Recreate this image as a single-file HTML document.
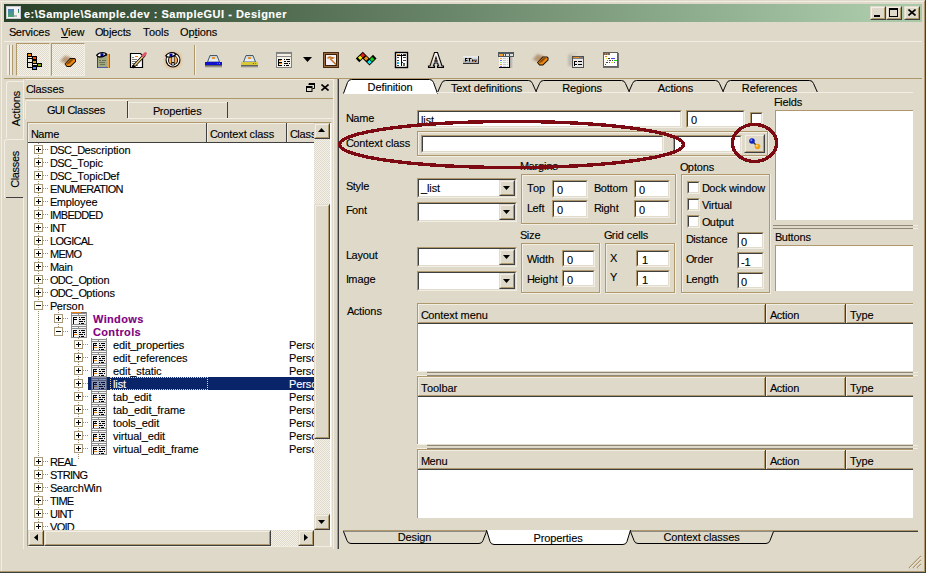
<!DOCTYPE html><html><head><meta charset="utf-8"><style>
html,body{margin:0;padding:0;}
body{width:926px;height:573px;overflow:hidden;position:relative;background:#ded9c9;font-family:"Liberation Sans",sans-serif;font-size:11px;color:#000;}
div{position:absolute;box-sizing:border-box;}
.t{white-space:nowrap;line-height:13px;height:13px;margin-top:1px;letter-spacing:-0.1px;-webkit-text-stroke:0.12px currentColor;}
svg{position:absolute;}
</style></head><body>
<div style="left:0px;top:1px;width:925px;height:1px;background:#f2eee4"></div>
<div style="left:1px;top:1px;width:1px;height:571px;background:#f2eee4"></div>
<div style="left:0px;top:571px;width:926px;height:1px;background:#ae986c"></div>
<div style="left:924px;top:1px;width:1px;height:571px;background:#ae986c"></div>
<div style="left:0px;top:572px;width:926px;height:1px;background:#3f3f3f"></div>
<div style="left:925px;top:0px;width:1px;height:573px;background:#3f3f3f"></div>
<div style="left:4px;top:4px;width:918px;height:18px;background:linear-gradient(to right,#284028 0%,#a8c8a8 94%)"></div>
<div style="left:6px;top:6px;width:15px;height:13px;background:#f2f2f2;border:1px solid #c8c8d0"></div>
<div style="left:8px;top:9px;width:6px;height:8px;background:linear-gradient(#4a80b8,#48a868)"></div>
<div style="left:18px;top:9px;width:1px;height:4px;background:linear-gradient(#3050b0,#40b040)"></div>
<div style="left:14px;top:15px;width:3px;height:2px;background:#b8b8b8"></div>
<div class="t" style="left:24px;top:7px;color:#fff;font-weight:bold;letter-spacing:0.5px">e:\Sample\Sample.dev : SampleGUI - Designer</div>
<div style="left:870px;top:6px;width:16px;height:14px;background:#ded9c9;border-top:1px solid #e0dbcc;border-left:1px solid #e0dbcc;border-right:1px solid #3f3f3f;border-bottom:1px solid #3f3f3f;box-sizing:border-box"></div>
<div style="left:871px;top:7px;width:14px;height:12px;border-top:1px solid #f2eee4;border-left:1px solid #f2eee4;border-right:1px solid #ae986c;border-bottom:1px solid #ae986c;box-sizing:border-box"></div>
<div style="left:886px;top:6px;width:16px;height:14px;background:#ded9c9;border-top:1px solid #e0dbcc;border-left:1px solid #e0dbcc;border-right:1px solid #3f3f3f;border-bottom:1px solid #3f3f3f;box-sizing:border-box"></div>
<div style="left:887px;top:7px;width:14px;height:12px;border-top:1px solid #f2eee4;border-left:1px solid #f2eee4;border-right:1px solid #ae986c;border-bottom:1px solid #ae986c;box-sizing:border-box"></div>
<div style="left:904px;top:6px;width:16px;height:14px;background:#ded9c9;border-top:1px solid #e0dbcc;border-left:1px solid #e0dbcc;border-right:1px solid #3f3f3f;border-bottom:1px solid #3f3f3f;box-sizing:border-box"></div>
<div style="left:905px;top:7px;width:14px;height:12px;border-top:1px solid #f2eee4;border-left:1px solid #f2eee4;border-right:1px solid #ae986c;border-bottom:1px solid #ae986c;box-sizing:border-box"></div>
<div style="left:874px;top:15px;width:6px;height:2px;background:#000"></div>
<div style="left:889px;top:8px;width:9px;height:9px;border:1px solid #000;border-top:2px solid #000"></div>
<svg style="left:908px;top:9px" width="8" height="7" viewBox="0 0 8 7"><path d="M0.5 0.5L7.5 6.5M7.5 0.5L0.5 6.5" stroke="#000" stroke-width="1.6"/></svg>
<div class="t" style="left:9px;top:25px;"><span style="letter-spacing:-0.7px">S</span>ervices</div>
<div class="t" style="left:61px;top:25px;"><u>V</u>iew</div>
<div class="t" style="left:95px;top:25px;"><span style="letter-spacing:-0.7px">O</span>bjects</div>
<div class="t" style="left:143px;top:25px;"><span style="letter-spacing:-0.7px">T</span>ools</div>
<div class="t" style="left:180px;top:25px;">Op<u>t</u>ions</div>
<div style="left:4px;top:41px;width:918px;height:1px;background:#f2eee4"></div>
<div style="left:4px;top:78px;width:918px;height:1px;background:#ae986c"></div>
<div style="left:7px;top:45px;width:1px;height:30px;background:#f2eee4"></div>
<div style="left:8px;top:45px;width:1px;height:30px;background:#f2eee4"></div>
<div style="left:9px;top:45px;width:1px;height:30px;background:#ae986c"></div>
<div style="left:10px;top:45px;width:1px;height:30px;background:#f2eee4"></div>
<div style="left:11px;top:45px;width:1px;height:30px;background:#f2eee4"></div>
<div style="left:12px;top:45px;width:1px;height:30px;background:#ae986c"></div>
<div style="left:16px;top:43px;width:34px;height:33px;border-top:1px solid #ae986c;border-left:1px solid #ae986c;border-right:1px solid #f2eee4;border-bottom:1px solid #f2eee4;background-image:repeating-conic-gradient(#ded9c9 0 25%,#f4f2ea 0 50%);background-size:2px 2px"></div>
<div style="left:51px;top:43px;width:34px;height:33px;border-top:1px solid #ae986c;border-left:1px solid #ae986c;border-right:1px solid #f2eee4;border-bottom:1px solid #f2eee4;background-image:repeating-conic-gradient(#ded9c9 0 25%,#f4f2ea 0 50%);background-size:2px 2px"></div>
<div style="left:194px;top:45px;width:1px;height:30px;background:#ae986c"></div>
<div style="left:195px;top:45px;width:1px;height:30px;background:#f2eee4"></div>
<svg style="left:0;top:0" width="926" height="80" viewBox="0 0 926 80"><defs><filter id="bl" x="-50%" y="-50%" width="200%" height="200%"><feGaussianBlur stdDeviation="1.1"/></filter><filter id="bl2" x="-50%" y="-50%" width="200%" height="200%"><feGaussianBlur stdDeviation="0.8"/></filter><linearGradient id="dg" x1="0" y1="0" x2="0" y2="1"><stop offset="0" stop-color="#b8d0d8"/><stop offset="1" stop-color="#f4fcff"/></linearGradient><linearGradient id="sg" x1="0" y1="0" x2="0" y2="1"><stop offset="0" stop-color="#303030" stop-opacity=".85"/><stop offset="1" stop-color="#303030" stop-opacity="0"/></linearGradient><linearGradient id="eg" x1="0" y1="0" x2="0" y2="1"><stop offset="0" stop-color="#f0f0f0"/><stop offset="1" stop-color="#a8a8a8"/></linearGradient><linearGradient id="ag" x1="0" y1="0" x2="0" y2="1"><stop offset="0" stop-color="#ffffff"/><stop offset=".6" stop-color="#e8e8e8"/><stop offset="1" stop-color="#b8b8b8"/></linearGradient><linearGradient id="wg" x1="0" y1="0" x2="1" y2="0"><stop offset="0" stop-color="#a8a49c"/><stop offset="1" stop-color="#e8e4dc"/></linearGradient></defs><rect x="27" y="53" width="5" height="4" fill="#000"/><rect x="28" y="54" width="3" height="2" fill="#f08a10"/><rect x="27" y="57" width="1" height="11" fill="#000"/><rect x="27" y="58" width="5" height="1" fill="#000"/><rect x="32" y="56" width="5" height="4" fill="#000"/><rect x="33" y="57" width="3" height="2" fill="#f04010"/><rect x="27" y="62" width="5" height="1" fill="#000"/><rect x="32" y="60" width="5" height="4" fill="#000"/><rect x="33" y="61" width="3" height="2" fill="#d0a020"/><rect x="32" y="64" width="1" height="2" fill="#000"/><rect x="32" y="65" width="5" height="1" fill="#000"/><rect x="37" y="63" width="5" height="4" fill="#000"/><rect x="38" y="64" width="3" height="2" fill="#80a010"/><rect x="27" y="67" width="5" height="1" fill="#000"/><rect x="32" y="66" width="5" height="4" fill="#000"/><rect x="33" y="67" width="3" height="2" fill="#5080f0"/><polygon points="60,61 65,55.5 72,58 67,64" fill="#a88058" opacity=".75" filter="url(#bl)"/><polygon points="64.5,64 70,58 74.8,58 76,59.2 76,61.8 70.5,67 66.8,67" fill="#100800"/><polygon points="65.5,64 70.4,59 74.5,59 75,60 75,61.6 70.1,66 67.2,66" fill="#ea8a14"/><polygon points="65.5,64 70.4,59 74.5,59 69.5,64" fill="#b4650e"/><path d="M68.2 62.8 L72.8 59M66.8 64.5 L71.6 60.4" stroke="#7a3c00" stroke-width=".8"/><rect x="97.5" y="55.5" width="10" height="12" fill="#a4a880" stroke="#404838" stroke-width="1"/><rect x="107" y="54" width="3" height="14" fill="#f0a040"/><rect x="109" y="54" width="1" height="14" fill="#b06010"/><path d="M99 60.5h2M102 60.5h4M99 62.5h6M100 64.5h5" stroke="#6a7258" stroke-width="1"/><rect x="98" y="67" width="10" height="1" fill="#5060a0"/><path d="M96.8 55.2 Q98.5 52.6 102.5 52.6 Q105.5 52.6 106.5 54.2 Q104 57 99.5 57 Q97.5 56.8 96.8 55.2Z" fill="#fff" stroke="#000" stroke-width="1.4"/><rect x="100.5" y="53.3" width="3" height="3" fill="#000090"/><path d="M130.5 53.5H140.5L142.5 55.5V67.5H130.5Z" fill="#fff" stroke="#000" stroke-width="1.2"/><path d="M132 57.5h2M132 59.5h5M132 61.5h4M132 63.5h3M132 65.5h6" stroke="#808080" stroke-width="1"/><rect x="135" y="56" width="3" height="1" fill="#f08010"/><path d="M133.5 66.5 L144 55.5" stroke="#000" stroke-width="3.2" stroke-linecap="round"/><path d="M134.5 65.5 L143.5 56" stroke="#f0d080" stroke-width="1.6"/><path d="M143 56 L145.5 53.5" stroke="#e05868" stroke-width="2.8" stroke-linecap="round"/><rect x="164.5" y="51.5" width="17" height="17" rx="6" fill="#f0b070" opacity=".55" filter="url(#bl2)"/><circle cx="173" cy="60" r="7.5" fill="#000"/><circle cx="173" cy="60" r="6.4" fill="#fff"/><circle cx="173" cy="60.2" r="5" fill="#000"/><circle cx="173" cy="60.2" r="4.1" fill="#f4a850"/><rect x="171.5" y="55" width="3" height="8.5" fill="#000"/><rect x="172.2" y="56" width="1.6" height="6.2" fill="#fff"/><rect x="171.5" y="62.5" width="3" height="3" fill="#000"/><rect x="172.2" y="63.2" width="1.6" height="1.6" fill="#fff"/><path d="M165.8 55.8 Q168 52.5 172 52.5 Q175 52.5 175.8 54.5 Q173 57.5 167.5 57 Z" fill="#fff" stroke="#000" stroke-width="1.2"/><rect x="169.5" y="53.5" width="3" height="3" fill="#000090"/><rect x="205" y="65" width="17" height="3" fill="url(#sg)"/><path d="M207.5 62 L210 55.5 H217 L219.5 62Z" fill="url(#dg)" stroke="#485868" stroke-width="1"/><rect x="212" y="57" width="3" height="2" fill="#f09030"/><rect x="205" y="62" width="17" height="3" fill="#1010d0"/><rect x="217" y="63" width="1" height="1" fill="#f02020"/><rect x="219" y="63" width="1" height="1" fill="#20d020"/><rect x="241" y="65" width="17" height="3" fill="url(#sg)"/><path d="M243.5 62 L246 55.5 H253 L255.5 62Z" fill="url(#dg)" stroke="#485868" stroke-width="1"/><rect x="248" y="57" width="3" height="2" fill="#f09030"/><rect x="241" y="62" width="17" height="3" fill="#d8c838"/><rect x="253" y="63" width="1" height="1" fill="#f02020"/><rect x="255" y="63" width="1" height="1" fill="#20d020"/><rect x="276.5" y="52.5" width="15" height="15" fill="#ece8dc" stroke="#808080"/><rect x="277" y="53" width="14" height="1" fill="#8a8a8a"/><rect x="278" y="54" width="12" height="2" fill="#f4f0e4"/><rect x="277" y="56" width="14" height="1" fill="#8a8a8a"/><rect x="278" y="57" width="5" height="1" fill="#f4f0e4"/><rect x="284" y="57" width="6" height="1" fill="#f4f0e4"/><rect x="277" y="58" width="14" height="9" fill="#f4f2ea"/><rect x="278" y="59" width="4" height="1" fill="#000"/><rect x="278" y="59" width="1" height="7" fill="#000"/><rect x="278" y="62" width="4" height="1" fill="#000"/><rect x="279" y="63" width="3" height="1" fill="#f08010"/><rect x="279" y="60" width="2" height="1" fill="#f08010"/><rect x="278" y="65" width="4" height="1" fill="#000"/><rect x="284" y="59" width="1" height="1" fill="#000"/><rect x="286" y="59" width="4" height="1" fill="#000"/><rect x="284" y="61" width="2" height="1" fill="#000"/><rect x="287" y="61" width="3" height="1" fill="#000"/><rect x="284" y="63" width="4" height="1" fill="#000"/><rect x="289" y="63" width="1" height="1" fill="#000"/><rect x="284" y="65" width="1" height="1" fill="#000"/><rect x="286" y="65" width="3" height="1" fill="#000"/><path d="M303 57H312L307.5 62Z" fill="#000"/><rect x="323" y="52" width="16" height="16" fill="#4a2a10"/><rect x="324" y="53" width="14" height="14" fill="#9a6a3a"/><rect x="325" y="54" width="12" height="12" fill="#3a2008"/><rect x="326" y="55" width="10" height="10" fill="#f6f2fa"/><path d="M327.5 58.5 Q329 56.5 331.5 57.5 L333 58 Q331 59 330 58.5 L336 64.5" fill="none" stroke="#c87828" stroke-width="1.6"/><path d="M359.3 58.6 L362.8 55.2 L369.5 61.9 L373 58.4" fill="none" stroke="#000" stroke-width="5" stroke-linejoin="miter" stroke-linecap="square"/><rect x="358.59999999999997" y="56.1" width="3.2" height="3.2" transform="rotate(45 360.2 57.7)" fill="#f0f000"/><rect x="361.2" y="53.6" width="3.2" height="3.2" transform="rotate(45 362.8 55.2)" fill="#f01818"/><rect x="364.59999999999997" y="57.0" width="3.2" height="3.2" transform="rotate(45 366.2 58.6)" fill="#f08c10"/><rect x="367.9" y="60.3" width="3.2" height="3.2" transform="rotate(45 369.5 61.9)" fill="#10e8f0"/><rect x="370.5" y="57.699999999999996" width="3.2" height="3.2" transform="rotate(45 372.1 59.3)" fill="#10d010"/><rect x="395.5" y="52.5" width="12" height="15" fill="#fff" stroke="#000" stroke-width="1.4"/><path d="M397 57.5h2M397 60.5h2M397 62.5h2M397 65.5h2M403 54.5h3M403 57.5h3M403 60.5h3M402 62.5h1" stroke="#404040"/><path d="M401.5 54v12M397 55.5h9" stroke="#000"/><rect x="397" y="54" width="3" height="1" fill="#f08010"/><rect x="397" y="62" width="1" height="2" fill="#e040c0"/><rect x="398" y="62" width="1" height="2" fill="#20c0f0"/><rect x="403" y="63" width="2" height="3" fill="#404040"/><rect x="403.5" y="63.5" width="1" height="1" fill="#20a0f0"/><rect x="403.5" y="64.5" width="1" height="1" fill="#c0f020"/><path d="M428.5 67.5 V66 H430 L434.5 52.5 H437.5 L442 66 H443.5 V67.5 H437.5 V66 H438.5 L437.6 63 H434.4 L433.5 66 H434.5 V67.5Z M434.9 61.2 H437.1 L436 57.5Z" fill="url(#ag)" stroke="#000" stroke-width="1.1" fill-rule="evenodd"/><path d="M434.5 52.5 L429.5 66" stroke="#f0a050" stroke-width="1" opacity=".5" filter="url(#bl2)"/><rect x="435.5" y="59" width="1" height="1" fill="#f08010"/><rect x="463" y="56" width="16" height="8" fill="#303030"/><rect x="463" y="56" width="15" height="7" fill="url(#eg)"/><path d="M465 58.5h2.5M465 60.5h2.5M465.5 58v3.5M468.5 58.5h3M469.5 59v2.5M472.5 59.5v2M474 59.5v2M476 59.5v2M474 61.5h2" stroke="#000" stroke-width="1"/><rect x="474" y="61" width="1" height="1" fill="#f08010"/><rect x="498" y="52" width="16" height="5" fill="#505860"/><rect x="499" y="54" width="4" height="2" fill="#f0a030"/><rect x="504" y="54" width="9" height="2" fill="#e0e0e0"/><rect x="505" y="54" width="1" height="2" fill="#404040"/><rect x="509" y="54" width="1" height="2" fill="#404040"/><rect x="510" y="57" width="4" height="11" fill="url(#wg)"/><rect x="499" y="57" width="11" height="11" fill="#000"/><rect x="499" y="57" width="10" height="10" fill="#f4f4f4"/><rect x="500" y="58" width="2" height="1" fill="#f0a050"/><rect x="503" y="58" width="3" height="1" fill="#c8c8c8"/><rect x="507" y="58" width="1" height="1" fill="#c8c8c8"/><rect x="500" y="60" width="2" height="1" fill="#7070f0"/><rect x="503" y="60" width="3" height="1" fill="#c8c8c8"/><rect x="507" y="60" width="1" height="1" fill="#c8c8c8"/><rect x="500" y="62" width="2" height="1" fill="#90f070"/><rect x="503" y="62" width="3" height="1" fill="#c8c8c8"/><rect x="507" y="62" width="1" height="1" fill="#c8c8c8"/><rect x="500" y="64" width="2" height="1" fill="#f0a050"/><rect x="503" y="64" width="3" height="1" fill="#c8c8c8"/><rect x="507" y="64" width="1" height="1" fill="#c8c8c8"/><rect x="500" y="66" width="2" height="1" fill="#7070f0"/><rect x="503" y="66" width="3" height="1" fill="#c8c8c8"/><rect x="507" y="66" width="1" height="1" fill="#c8c8c8"/><polygon points="532.5,59.5 537.5,54.0 544.5,56.5 539.5,62.5" fill="#a88058" opacity=".75" filter="url(#bl)"/><polygon points="537.0,62.5 542.5,56.5 547.3,56.5 548.5,57.7 548.5,60.3 543.0,65.5 539.3,65.5" fill="#100800"/><polygon points="538.0,62.5 542.9,57.5 547.0,57.5 547.5,58.5 547.5,60.1 542.6,64.5 539.7,64.5" fill="#ea8a14"/><polygon points="538.0,62.5 542.9,57.5 547.0,57.5 542.0,62.5" fill="#b4650e"/><path d="M540.7 61.3 L545.3 57.5M539.3 63.0 L544.1 58.9" stroke="#7a3c00" stroke-width=".8"/><path d="M568 54 L571 52 H578 L576 56 H568Z" fill="#d8d0c0" opacity=".8"/><rect x="568" y="55" width="5" height="11" fill="#b8b4a8" opacity=".8" filter="url(#bl2)"/><rect x="572.5" y="56.5" width="11" height="11" fill="#e8e8e8" stroke="#505050"/><rect x="573" y="57" width="10" height="2" fill="#808080"/><rect x="574" y="57" width="5" height="1" fill="#f09020"/><rect x="574" y="61" width="3" height="1" fill="#000"/><rect x="574" y="61" width="1" height="5" fill="#000"/><rect x="574" y="64" width="3" height="1" fill="#000"/><rect x="575" y="65" width="2" height="1" fill="#fff"/><rect x="578" y="61" width="4" height="1" fill="#000"/><rect x="578" y="64" width="4" height="1" fill="#000"/><rect x="603" y="53" width="16" height="15" fill="#707070"/><rect x="603" y="52" width="15" height="15" fill="#606060"/><rect x="604" y="53" width="13" height="13" fill="#fff"/><rect x="604" y="53" width="6" height="2" fill="#806040"/><rect x="605" y="53.5" width="1" height="1" fill="#f0a030"/><rect x="607" y="53.5" width="1" height="1" fill="#f0a030"/><rect x="605" y="56" width="2" height="1" fill="#f08010"/><rect x="606" y="58" width="1" height="1" fill="#f0f000"/><rect x="608" y="58" width="2" height="1" fill="#404040"/><rect x="611" y="58" width="4" height="1" fill="#4040f0"/><rect x="607" y="60" width="1" height="1" fill="#20d020"/><rect x="609" y="60" width="2" height="1" fill="#404040"/><rect x="612" y="60" width="1" height="1" fill="#404040"/><rect x="614" y="60" width="3" height="1" fill="#20d020"/><rect x="606" y="62" width="2" height="1" fill="#404040"/><rect x="609" y="62" width="1" height="1" fill="#4040f0"/><rect x="611" y="62" width="2" height="1" fill="#f0f000"/><rect x="614" y="62" width="1" height="1" fill="#4040f0"/><rect x="605" y="64" width="1" height="1" fill="#d02020"/></svg>
<div style="left:23px;top:79px;width:1px;height:470px;background:#f2eee4"></div>
<div style="left:6px;top:81px;width:17px;height:57px;border-left:1px solid #f2eee4;border-top:1px solid #f2eee4;border-radius:3px 0 0 0"></div>
<div class="t" style="left:-12px;top:101px;width:57px;text-align:center;transform:rotate(-90deg);">Actions</div>
<div style="left:4px;top:139px;width:20px;height:59px;background:#ded9c9;border-left:1px solid #f2eee4;border-top:1px solid #f2eee4;border-radius:3px 0 0 0"></div>
<div style="left:6px;top:197px;width:17px;height:1px;background:#3f3f3f"></div>
<div class="t" style="left:-15px;top:162px;width:60px;text-align:center;transform:rotate(-90deg);letter-spacing:-0.35px">Classes</div>
<div style="left:25px;top:79px;width:308px;height:1px;background:#f2eee4"></div>
<div class="t" style="left:26px;top:82px;"><span style="letter-spacing:-0.7px">C</span>lasses</div>
<svg style="left:306px;top:83px" width="9" height="9" viewBox="0 0 9 9"><path d="M3 0.5H8.5V5.5H6.5M3 0.5V2" fill="none" stroke="#000" stroke-width="1"/><rect x="3" y="0" width="6" height="2" fill="#000"/><rect x="0.5" y="3.5" width="5.5" height="5" fill="none" stroke="#000"/><rect x="0" y="3" width="6" height="2" fill="#000"/></svg>
<svg style="left:321px;top:84px" width="8" height="7" viewBox="0 0 8 7"><path d="M0.5 0.5L7.5 6.5M7.5 0.5L0.5 6.5" stroke="#000" stroke-width="1.6"/></svg>
<div style="left:25px;top:98px;width:308px;height:1px;background:#ae986c"></div>
<div style="left:333px;top:79px;width:1px;height:470px;background:#f2eee4"></div>
<div style="left:25px;top:118px;width:308px;height:1px;background:#f2eee4"></div>
<div style="left:25px;top:100px;width:103px;height:19px;background:#ded9c9;border-top:1px solid #f2eee4;border-left:1px solid #f2eee4;border-radius:2px 0 0 0"></div>
<div style="left:127px;top:101px;width:1px;height:17px;background:#3f3f3f"></div>
<div class="t" style="left:47px;top:103px;"><span style="letter-spacing:-0.7px">GUI</span> <span style="letter-spacing:-0.7px">C</span>lasses</div>
<div style="left:128px;top:102px;width:100px;height:16px;border-top:1px solid #f2eee4;border-left:1px solid #f2eee4;"></div>
<div style="left:227px;top:102px;width:1px;height:16px;background:#3f3f3f"></div>
<div class="t" style="left:153px;top:104px;"><span style="letter-spacing:-0.7px">P</span>roperties</div>
<div style="left:27px;top:122px;width:305px;height:425px;background:#fff;border-top:1px solid #ae986c;border-left:1px solid #ae986c;border-bottom:1px solid #f2eee4;border-right:1px solid #f2eee4"></div>
<div style="left:29px;top:123px;width:285px;height:19px;overflow:hidden">
</div>
<div style="left:28px;top:123px;width:179px;height:20px;background:#ded9c9;border-top:1px solid #f2eee4;border-left:1px solid #f2eee4;border-right:1px solid #ae986c;border-bottom:1px solid #ae986c"></div>
<div style="left:28px;top:142px;width:179px;height:1px;background:#3f3f3f"></div>
<div style="left:206px;top:123px;width:1px;height:20px;background:#3f3f3f"></div>
<div class="t" style="left:31px;top:127px;"><span style="letter-spacing:-0.7px">N</span>ame</div>
<div style="left:207px;top:123px;width:80px;height:20px;background:#ded9c9;border-top:1px solid #f2eee4;border-left:1px solid #f2eee4;border-right:1px solid #ae986c;border-bottom:1px solid #ae986c"></div>
<div style="left:207px;top:142px;width:80px;height:1px;background:#3f3f3f"></div>
<div style="left:286px;top:123px;width:1px;height:20px;background:#3f3f3f"></div>
<div class="t" style="left:210px;top:127px;"><span style="letter-spacing:-0.7px">C</span>ontext class</div>
<div style="left:287px;top:123px;width:40px;height:20px;background:#ded9c9;border-top:1px solid #f2eee4;border-left:1px solid #f2eee4;border-right:1px solid #ae986c;border-bottom:1px solid #ae986c"></div>
<div style="left:287px;top:142px;width:40px;height:1px;background:#3f3f3f"></div>
<div style="left:326px;top:123px;width:1px;height:20px;background:#3f3f3f"></div>
<div class="t" style="left:290px;top:127px;"><span style="letter-spacing:-0.7px">C</span>lass</div>
<div style="left:29px;top:143px;width:285px;height:387px;overflow:hidden;background:#fff">
<div style="left:9px;top:0px;width:1px;height:390px;background:repeating-linear-gradient(to bottom,#a09070 0 1px,transparent 1px 2px)"></div>
<div style="left:29px;top:165px;width:1px;height:21px;background:repeating-linear-gradient(to bottom,#a09070 0 1px,transparent 1px 2px)"></div>
<div style="left:49px;top:191px;width:1px;height:125px;background:repeating-linear-gradient(to bottom,#a09070 0 1px,transparent 1px 2px)"></div>
<div style="left:14px;top:6px;width:6px;height:1px;background:repeating-linear-gradient(to right,#a09070 0 1px,transparent 1px 2px)"></div>
<div style="left:5px;top:2px;width:9px;height:9px;border:1px solid #a89a78;background:#fff"></div>
<div style="left:7px;top:6px;width:5px;height:1px;background:#000"></div>
<div style="left:9px;top:4px;width:1px;height:5px;background:#000"></div>
<div class="t" style="left:21px;top:0px;color:#000;"><span style="letter-spacing:-0.7px">DSC</span>_<span style="letter-spacing:-0.7px">D</span>escription</div>
<div style="left:14px;top:19px;width:6px;height:1px;background:repeating-linear-gradient(to right,#a09070 0 1px,transparent 1px 2px)"></div>
<div style="left:5px;top:15px;width:9px;height:9px;border:1px solid #a89a78;background:#fff"></div>
<div style="left:7px;top:19px;width:5px;height:1px;background:#000"></div>
<div style="left:9px;top:17px;width:1px;height:5px;background:#000"></div>
<div class="t" style="left:21px;top:13px;color:#000;"><span style="letter-spacing:-0.7px">DSC</span>_<span style="letter-spacing:-0.7px">T</span>opic</div>
<div style="left:14px;top:32px;width:6px;height:1px;background:repeating-linear-gradient(to right,#a09070 0 1px,transparent 1px 2px)"></div>
<div style="left:5px;top:28px;width:9px;height:9px;border:1px solid #a89a78;background:#fff"></div>
<div style="left:7px;top:32px;width:5px;height:1px;background:#000"></div>
<div style="left:9px;top:30px;width:1px;height:5px;background:#000"></div>
<div class="t" style="left:21px;top:26px;color:#000;"><span style="letter-spacing:-0.7px">DSC</span>_<span style="letter-spacing:-0.7px">T</span>opic<span style="letter-spacing:-0.7px">D</span>ef</div>
<div style="left:14px;top:45px;width:6px;height:1px;background:repeating-linear-gradient(to right,#a09070 0 1px,transparent 1px 2px)"></div>
<div style="left:5px;top:41px;width:9px;height:9px;border:1px solid #a89a78;background:#fff"></div>
<div style="left:7px;top:45px;width:5px;height:1px;background:#000"></div>
<div style="left:9px;top:43px;width:1px;height:5px;background:#000"></div>
<div class="t" style="left:21px;top:39px;color:#000;"><span style="letter-spacing:-0.7px">ENUMERATION</span></div>
<div style="left:14px;top:58px;width:6px;height:1px;background:repeating-linear-gradient(to right,#a09070 0 1px,transparent 1px 2px)"></div>
<div style="left:5px;top:54px;width:9px;height:9px;border:1px solid #a89a78;background:#fff"></div>
<div style="left:7px;top:58px;width:5px;height:1px;background:#000"></div>
<div style="left:9px;top:56px;width:1px;height:5px;background:#000"></div>
<div class="t" style="left:21px;top:52px;color:#000;"><span style="letter-spacing:-0.7px">E</span>mployee</div>
<div style="left:14px;top:71px;width:6px;height:1px;background:repeating-linear-gradient(to right,#a09070 0 1px,transparent 1px 2px)"></div>
<div style="left:5px;top:67px;width:9px;height:9px;border:1px solid #a89a78;background:#fff"></div>
<div style="left:7px;top:71px;width:5px;height:1px;background:#000"></div>
<div style="left:9px;top:69px;width:1px;height:5px;background:#000"></div>
<div class="t" style="left:21px;top:65px;color:#000;"><span style="letter-spacing:-0.7px">IMBEDDED</span></div>
<div style="left:14px;top:84px;width:6px;height:1px;background:repeating-linear-gradient(to right,#a09070 0 1px,transparent 1px 2px)"></div>
<div style="left:5px;top:80px;width:9px;height:9px;border:1px solid #a89a78;background:#fff"></div>
<div style="left:7px;top:84px;width:5px;height:1px;background:#000"></div>
<div style="left:9px;top:82px;width:1px;height:5px;background:#000"></div>
<div class="t" style="left:21px;top:78px;color:#000;"><span style="letter-spacing:-0.7px">INT</span></div>
<div style="left:14px;top:97px;width:6px;height:1px;background:repeating-linear-gradient(to right,#a09070 0 1px,transparent 1px 2px)"></div>
<div style="left:5px;top:93px;width:9px;height:9px;border:1px solid #a89a78;background:#fff"></div>
<div style="left:7px;top:97px;width:5px;height:1px;background:#000"></div>
<div style="left:9px;top:95px;width:1px;height:5px;background:#000"></div>
<div class="t" style="left:21px;top:91px;color:#000;"><span style="letter-spacing:-0.7px">LOGICAL</span></div>
<div style="left:14px;top:110px;width:6px;height:1px;background:repeating-linear-gradient(to right,#a09070 0 1px,transparent 1px 2px)"></div>
<div style="left:5px;top:106px;width:9px;height:9px;border:1px solid #a89a78;background:#fff"></div>
<div style="left:7px;top:110px;width:5px;height:1px;background:#000"></div>
<div style="left:9px;top:108px;width:1px;height:5px;background:#000"></div>
<div class="t" style="left:21px;top:104px;color:#000;"><span style="letter-spacing:-0.7px">MEMO</span></div>
<div style="left:14px;top:123px;width:6px;height:1px;background:repeating-linear-gradient(to right,#a09070 0 1px,transparent 1px 2px)"></div>
<div style="left:5px;top:119px;width:9px;height:9px;border:1px solid #a89a78;background:#fff"></div>
<div style="left:7px;top:123px;width:5px;height:1px;background:#000"></div>
<div style="left:9px;top:121px;width:1px;height:5px;background:#000"></div>
<div class="t" style="left:21px;top:117px;color:#000;"><span style="letter-spacing:-0.7px">M</span>ain</div>
<div style="left:14px;top:136px;width:6px;height:1px;background:repeating-linear-gradient(to right,#a09070 0 1px,transparent 1px 2px)"></div>
<div style="left:5px;top:132px;width:9px;height:9px;border:1px solid #a89a78;background:#fff"></div>
<div style="left:7px;top:136px;width:5px;height:1px;background:#000"></div>
<div style="left:9px;top:134px;width:1px;height:5px;background:#000"></div>
<div class="t" style="left:21px;top:130px;color:#000;"><span style="letter-spacing:-0.7px">ODC</span>_<span style="letter-spacing:-0.7px">O</span>ption</div>
<div style="left:14px;top:149px;width:6px;height:1px;background:repeating-linear-gradient(to right,#a09070 0 1px,transparent 1px 2px)"></div>
<div style="left:5px;top:145px;width:9px;height:9px;border:1px solid #a89a78;background:#fff"></div>
<div style="left:7px;top:149px;width:5px;height:1px;background:#000"></div>
<div style="left:9px;top:147px;width:1px;height:5px;background:#000"></div>
<div class="t" style="left:21px;top:143px;color:#000;"><span style="letter-spacing:-0.7px">ODC</span>_<span style="letter-spacing:-0.7px">O</span>ptions</div>
<div style="left:14px;top:162px;width:6px;height:1px;background:repeating-linear-gradient(to right,#a09070 0 1px,transparent 1px 2px)"></div>
<div style="left:5px;top:158px;width:9px;height:9px;border:1px solid #a89a78;background:#fff"></div>
<div style="left:7px;top:162px;width:5px;height:1px;background:#000"></div>
<div class="t" style="left:21px;top:156px;color:#000;"><span style="letter-spacing:-0.7px">P</span>erson</div>
<div style="left:34px;top:175px;width:6px;height:1px;background:repeating-linear-gradient(to right,#a09070 0 1px,transparent 1px 2px)"></div>
<div style="left:25px;top:171px;width:9px;height:9px;border:1px solid #a89a78;background:#fff"></div>
<div style="left:27px;top:175px;width:5px;height:1px;background:#000"></div>
<div style="left:29px;top:173px;width:1px;height:5px;background:#000"></div>
<svg style="left:42px;top:169px" width="16" height="13" viewBox="0 0 16 13"><rect x="0" y="0" width="16" height="13" fill="#8c8c8c"/><rect x="1" y="0" width="9" height="1" fill="#f08010"/><rect x="1" y="2" width="6" height="1" fill="#f8f8f8"/><rect x="8" y="2" width="7" height="1" fill="#f8f8f8"/><rect x="1" y="4" width="14" height="8" fill="#ececec"/><rect x="1" y="4" width="6" height="8" fill="#f6f6f6"/><rect x="2" y="5" width="4" height="1" fill="#000"/><rect x="2" y="5" width="1" height="7" fill="#000"/><rect x="2" y="7" width="4" height="1" fill="#000"/><rect x="8" y="5" width="1" height="1" fill="#000"/><rect x="10" y="5" width="4" height="1" fill="#000"/><rect x="8" y="7" width="2" height="1" fill="#000"/><rect x="11" y="7" width="3" height="1" fill="#000"/><rect x="8" y="9" width="4" height="1" fill="#000"/><rect x="13" y="9" width="1" height="1" fill="#000"/><rect x="8" y="11" width="1" height="1" fill="#000"/><rect x="10" y="11" width="3" height="1" fill="#000"/><rect x="10" y="0" width="5" height="1" fill="#707070"/><rect x="3" y="8" width="3" height="4" fill="#f8f8f8"/></svg>
<div class="t" style="left:64px;top:169px;color:#800080;font-weight:bold;letter-spacing:0.35px;">Windows</div>
<div style="left:34px;top:188px;width:6px;height:1px;background:repeating-linear-gradient(to right,#a09070 0 1px,transparent 1px 2px)"></div>
<div style="left:25px;top:184px;width:9px;height:9px;border:1px solid #a89a78;background:#fff"></div>
<div style="left:27px;top:188px;width:5px;height:1px;background:#000"></div>
<svg style="left:42px;top:182px" width="16" height="13" viewBox="0 0 16 13"><rect x="0" y="0" width="16" height="13" fill="#8c8c8c"/><rect x="1" y="0" width="14" height="1" fill="#f8f8f8"/><rect x="1" y="2" width="6" height="1" fill="#f8f8f8"/><rect x="8" y="2" width="7" height="1" fill="#f8f8f8"/><rect x="1" y="4" width="14" height="8" fill="#ececec"/><rect x="1" y="4" width="6" height="8" fill="#f6f6f6"/><rect x="2" y="5" width="4" height="1" fill="#000"/><rect x="2" y="5" width="1" height="7" fill="#000"/><rect x="2" y="7" width="4" height="1" fill="#000"/><rect x="8" y="5" width="1" height="1" fill="#000"/><rect x="10" y="5" width="4" height="1" fill="#000"/><rect x="8" y="7" width="2" height="1" fill="#000"/><rect x="11" y="7" width="3" height="1" fill="#000"/><rect x="8" y="9" width="4" height="1" fill="#000"/><rect x="13" y="9" width="1" height="1" fill="#000"/><rect x="8" y="11" width="1" height="1" fill="#000"/><rect x="10" y="11" width="3" height="1" fill="#000"/><rect x="4" y="6" width="1" height="1" fill="#f08010"/><rect x="3" y="9" width="3" height="1" fill="#f08010"/></svg>
<div class="t" style="left:64px;top:182px;color:#800080;font-weight:bold;letter-spacing:0.35px;">Controls</div>
<div style="left:54px;top:201px;width:6px;height:1px;background:repeating-linear-gradient(to right,#a09070 0 1px,transparent 1px 2px)"></div>
<div style="left:45px;top:197px;width:9px;height:9px;border:1px solid #a89a78;background:#fff"></div>
<div style="left:47px;top:201px;width:5px;height:1px;background:#000"></div>
<div style="left:49px;top:199px;width:1px;height:5px;background:#000"></div>
<svg style="left:62px;top:195px" width="16" height="13" viewBox="0 0 16 13"><rect x="0" y="0" width="16" height="13" fill="#8c8c8c"/><rect x="1" y="0" width="14" height="1" fill="#f8f8f8"/><rect x="1" y="2" width="6" height="1" fill="#f8f8f8"/><rect x="8" y="2" width="7" height="1" fill="#f8f8f8"/><rect x="1" y="4" width="14" height="8" fill="#ececec"/><rect x="1" y="4" width="6" height="8" fill="#f6f6f6"/><rect x="2" y="5" width="4" height="1" fill="#000"/><rect x="2" y="5" width="1" height="7" fill="#000"/><rect x="2" y="7" width="4" height="1" fill="#000"/><rect x="8" y="5" width="1" height="1" fill="#000"/><rect x="10" y="5" width="4" height="1" fill="#000"/><rect x="8" y="7" width="2" height="1" fill="#000"/><rect x="11" y="7" width="3" height="1" fill="#000"/><rect x="8" y="9" width="4" height="1" fill="#000"/><rect x="13" y="9" width="1" height="1" fill="#000"/><rect x="8" y="11" width="1" height="1" fill="#000"/><rect x="10" y="11" width="3" height="1" fill="#000"/><rect x="4" y="6" width="1" height="1" fill="#f08010"/><rect x="3" y="9" width="3" height="1" fill="#f08010"/></svg>
<div class="t" style="left:84px;top:195px;color:#000;">edit_properties</div>
<div class="t" style="left:260px;top:195px;color:#000">Person</div>
<div style="left:54px;top:214px;width:6px;height:1px;background:repeating-linear-gradient(to right,#a09070 0 1px,transparent 1px 2px)"></div>
<div style="left:45px;top:210px;width:9px;height:9px;border:1px solid #a89a78;background:#fff"></div>
<div style="left:47px;top:214px;width:5px;height:1px;background:#000"></div>
<div style="left:49px;top:212px;width:1px;height:5px;background:#000"></div>
<svg style="left:62px;top:208px" width="16" height="13" viewBox="0 0 16 13"><rect x="0" y="0" width="16" height="13" fill="#8c8c8c"/><rect x="1" y="0" width="14" height="1" fill="#f8f8f8"/><rect x="1" y="2" width="6" height="1" fill="#f8f8f8"/><rect x="8" y="2" width="7" height="1" fill="#f8f8f8"/><rect x="1" y="4" width="14" height="8" fill="#ececec"/><rect x="1" y="4" width="6" height="8" fill="#f6f6f6"/><rect x="2" y="5" width="4" height="1" fill="#000"/><rect x="2" y="5" width="1" height="7" fill="#000"/><rect x="2" y="7" width="4" height="1" fill="#000"/><rect x="8" y="5" width="1" height="1" fill="#000"/><rect x="10" y="5" width="4" height="1" fill="#000"/><rect x="8" y="7" width="2" height="1" fill="#000"/><rect x="11" y="7" width="3" height="1" fill="#000"/><rect x="8" y="9" width="4" height="1" fill="#000"/><rect x="13" y="9" width="1" height="1" fill="#000"/><rect x="8" y="11" width="1" height="1" fill="#000"/><rect x="10" y="11" width="3" height="1" fill="#000"/><rect x="4" y="6" width="1" height="1" fill="#f08010"/><rect x="3" y="9" width="3" height="1" fill="#f08010"/></svg>
<div class="t" style="left:84px;top:208px;color:#000;">edit_references</div>
<div class="t" style="left:260px;top:208px;color:#000">Person</div>
<div style="left:54px;top:227px;width:6px;height:1px;background:repeating-linear-gradient(to right,#a09070 0 1px,transparent 1px 2px)"></div>
<div style="left:45px;top:223px;width:9px;height:9px;border:1px solid #a89a78;background:#fff"></div>
<div style="left:47px;top:227px;width:5px;height:1px;background:#000"></div>
<div style="left:49px;top:225px;width:1px;height:5px;background:#000"></div>
<svg style="left:62px;top:221px" width="16" height="13" viewBox="0 0 16 13"><rect x="0" y="0" width="16" height="13" fill="#8c8c8c"/><rect x="1" y="0" width="14" height="1" fill="#f8f8f8"/><rect x="1" y="2" width="6" height="1" fill="#f8f8f8"/><rect x="8" y="2" width="7" height="1" fill="#f8f8f8"/><rect x="1" y="4" width="14" height="8" fill="#ececec"/><rect x="1" y="4" width="6" height="8" fill="#f6f6f6"/><rect x="2" y="5" width="4" height="1" fill="#000"/><rect x="2" y="5" width="1" height="7" fill="#000"/><rect x="2" y="7" width="4" height="1" fill="#000"/><rect x="8" y="5" width="1" height="1" fill="#000"/><rect x="10" y="5" width="4" height="1" fill="#000"/><rect x="8" y="7" width="2" height="1" fill="#000"/><rect x="11" y="7" width="3" height="1" fill="#000"/><rect x="8" y="9" width="4" height="1" fill="#000"/><rect x="13" y="9" width="1" height="1" fill="#000"/><rect x="8" y="11" width="1" height="1" fill="#000"/><rect x="10" y="11" width="3" height="1" fill="#000"/><rect x="4" y="6" width="1" height="1" fill="#f08010"/><rect x="3" y="9" width="3" height="1" fill="#f08010"/></svg>
<div class="t" style="left:84px;top:221px;color:#000;">edit_static</div>
<div class="t" style="left:260px;top:221px;color:#000">Person</div>
<div style="left:59px;top:234px;width:226px;height:13px;background:#0a246a"></div>
<div style="left:81px;top:234px;width:98px;height:13px;border:1px dotted #e8d8a0"></div>
<div style="left:54px;top:240px;width:6px;height:1px;background:repeating-linear-gradient(to right,#a09070 0 1px,transparent 1px 2px)"></div>
<div style="left:45px;top:236px;width:9px;height:9px;border:1px solid #a89a78;background:#fff"></div>
<div style="left:47px;top:240px;width:5px;height:1px;background:#000"></div>
<div style="left:49px;top:238px;width:1px;height:5px;background:#000"></div>
<svg style="left:62px;top:234px" width="16" height="13" viewBox="0 0 16 13"><rect x="0" y="0" width="16" height="13" fill="#8c8c8c"/><rect x="1" y="0" width="14" height="1" fill="#f8f8f8"/><rect x="1" y="2" width="6" height="1" fill="#f8f8f8"/><rect x="8" y="2" width="7" height="1" fill="#f8f8f8"/><rect x="1" y="4" width="14" height="8" fill="#ececec"/><rect x="1" y="4" width="6" height="8" fill="#f6f6f6"/><rect x="2" y="5" width="4" height="1" fill="#000"/><rect x="2" y="5" width="1" height="7" fill="#000"/><rect x="2" y="7" width="4" height="1" fill="#000"/><rect x="8" y="5" width="1" height="1" fill="#000"/><rect x="10" y="5" width="4" height="1" fill="#000"/><rect x="8" y="7" width="2" height="1" fill="#000"/><rect x="11" y="7" width="3" height="1" fill="#000"/><rect x="8" y="9" width="4" height="1" fill="#000"/><rect x="13" y="9" width="1" height="1" fill="#000"/><rect x="8" y="11" width="1" height="1" fill="#000"/><rect x="10" y="11" width="3" height="1" fill="#000"/><rect x="4" y="6" width="1" height="1" fill="#f08010"/><rect x="3" y="9" width="3" height="1" fill="#f08010"/></svg>
<div style="left:62px;top:234px;width:16px;height:13px;background:rgba(10,36,106,.45)"></div>
<div class="t" style="left:84px;top:234px;color:#fff;">list</div>
<div class="t" style="left:260px;top:234px;color:#fff">Person</div>
<div style="left:54px;top:253px;width:6px;height:1px;background:repeating-linear-gradient(to right,#a09070 0 1px,transparent 1px 2px)"></div>
<div style="left:45px;top:249px;width:9px;height:9px;border:1px solid #a89a78;background:#fff"></div>
<div style="left:47px;top:253px;width:5px;height:1px;background:#000"></div>
<div style="left:49px;top:251px;width:1px;height:5px;background:#000"></div>
<svg style="left:62px;top:247px" width="16" height="13" viewBox="0 0 16 13"><rect x="0" y="0" width="16" height="13" fill="#8c8c8c"/><rect x="1" y="0" width="14" height="1" fill="#f8f8f8"/><rect x="1" y="2" width="6" height="1" fill="#f8f8f8"/><rect x="8" y="2" width="7" height="1" fill="#f8f8f8"/><rect x="1" y="4" width="14" height="8" fill="#ececec"/><rect x="1" y="4" width="6" height="8" fill="#f6f6f6"/><rect x="2" y="5" width="4" height="1" fill="#000"/><rect x="2" y="5" width="1" height="7" fill="#000"/><rect x="2" y="7" width="4" height="1" fill="#000"/><rect x="8" y="5" width="1" height="1" fill="#000"/><rect x="10" y="5" width="4" height="1" fill="#000"/><rect x="8" y="7" width="2" height="1" fill="#000"/><rect x="11" y="7" width="3" height="1" fill="#000"/><rect x="8" y="9" width="4" height="1" fill="#000"/><rect x="13" y="9" width="1" height="1" fill="#000"/><rect x="8" y="11" width="1" height="1" fill="#000"/><rect x="10" y="11" width="3" height="1" fill="#000"/><rect x="4" y="6" width="1" height="1" fill="#f08010"/><rect x="3" y="9" width="3" height="1" fill="#f08010"/></svg>
<div class="t" style="left:84px;top:247px;color:#000;">tab_edit</div>
<div class="t" style="left:260px;top:247px;color:#000">Person</div>
<div style="left:54px;top:266px;width:6px;height:1px;background:repeating-linear-gradient(to right,#a09070 0 1px,transparent 1px 2px)"></div>
<div style="left:45px;top:262px;width:9px;height:9px;border:1px solid #a89a78;background:#fff"></div>
<div style="left:47px;top:266px;width:5px;height:1px;background:#000"></div>
<div style="left:49px;top:264px;width:1px;height:5px;background:#000"></div>
<svg style="left:62px;top:260px" width="16" height="13" viewBox="0 0 16 13"><rect x="0" y="0" width="16" height="13" fill="#8c8c8c"/><rect x="1" y="0" width="14" height="1" fill="#f8f8f8"/><rect x="1" y="2" width="6" height="1" fill="#f8f8f8"/><rect x="8" y="2" width="7" height="1" fill="#f8f8f8"/><rect x="1" y="4" width="14" height="8" fill="#ececec"/><rect x="1" y="4" width="6" height="8" fill="#f6f6f6"/><rect x="2" y="5" width="4" height="1" fill="#000"/><rect x="2" y="5" width="1" height="7" fill="#000"/><rect x="2" y="7" width="4" height="1" fill="#000"/><rect x="8" y="5" width="1" height="1" fill="#000"/><rect x="10" y="5" width="4" height="1" fill="#000"/><rect x="8" y="7" width="2" height="1" fill="#000"/><rect x="11" y="7" width="3" height="1" fill="#000"/><rect x="8" y="9" width="4" height="1" fill="#000"/><rect x="13" y="9" width="1" height="1" fill="#000"/><rect x="8" y="11" width="1" height="1" fill="#000"/><rect x="10" y="11" width="3" height="1" fill="#000"/><rect x="4" y="6" width="1" height="1" fill="#f08010"/><rect x="3" y="9" width="3" height="1" fill="#f08010"/></svg>
<div class="t" style="left:84px;top:260px;color:#000;">tab_edit_frame</div>
<div class="t" style="left:260px;top:260px;color:#000">Person</div>
<div style="left:54px;top:279px;width:6px;height:1px;background:repeating-linear-gradient(to right,#a09070 0 1px,transparent 1px 2px)"></div>
<div style="left:45px;top:275px;width:9px;height:9px;border:1px solid #a89a78;background:#fff"></div>
<div style="left:47px;top:279px;width:5px;height:1px;background:#000"></div>
<div style="left:49px;top:277px;width:1px;height:5px;background:#000"></div>
<svg style="left:62px;top:273px" width="16" height="13" viewBox="0 0 16 13"><rect x="0" y="0" width="16" height="13" fill="#8c8c8c"/><rect x="1" y="0" width="14" height="1" fill="#f8f8f8"/><rect x="1" y="2" width="6" height="1" fill="#f8f8f8"/><rect x="8" y="2" width="7" height="1" fill="#f8f8f8"/><rect x="1" y="4" width="14" height="8" fill="#ececec"/><rect x="1" y="4" width="6" height="8" fill="#f6f6f6"/><rect x="2" y="5" width="4" height="1" fill="#000"/><rect x="2" y="5" width="1" height="7" fill="#000"/><rect x="2" y="7" width="4" height="1" fill="#000"/><rect x="8" y="5" width="1" height="1" fill="#000"/><rect x="10" y="5" width="4" height="1" fill="#000"/><rect x="8" y="7" width="2" height="1" fill="#000"/><rect x="11" y="7" width="3" height="1" fill="#000"/><rect x="8" y="9" width="4" height="1" fill="#000"/><rect x="13" y="9" width="1" height="1" fill="#000"/><rect x="8" y="11" width="1" height="1" fill="#000"/><rect x="10" y="11" width="3" height="1" fill="#000"/><rect x="4" y="6" width="1" height="1" fill="#f08010"/><rect x="3" y="9" width="3" height="1" fill="#f08010"/></svg>
<div class="t" style="left:84px;top:273px;color:#000;">tools_edit</div>
<div class="t" style="left:260px;top:273px;color:#000">Person</div>
<div style="left:54px;top:292px;width:6px;height:1px;background:repeating-linear-gradient(to right,#a09070 0 1px,transparent 1px 2px)"></div>
<div style="left:45px;top:288px;width:9px;height:9px;border:1px solid #a89a78;background:#fff"></div>
<div style="left:47px;top:292px;width:5px;height:1px;background:#000"></div>
<div style="left:49px;top:290px;width:1px;height:5px;background:#000"></div>
<svg style="left:62px;top:286px" width="16" height="13" viewBox="0 0 16 13"><rect x="0" y="0" width="16" height="13" fill="#8c8c8c"/><rect x="1" y="0" width="14" height="1" fill="#f8f8f8"/><rect x="1" y="2" width="6" height="1" fill="#f8f8f8"/><rect x="8" y="2" width="7" height="1" fill="#f8f8f8"/><rect x="1" y="4" width="14" height="8" fill="#ececec"/><rect x="1" y="4" width="6" height="8" fill="#f6f6f6"/><rect x="2" y="5" width="4" height="1" fill="#000"/><rect x="2" y="5" width="1" height="7" fill="#000"/><rect x="2" y="7" width="4" height="1" fill="#000"/><rect x="8" y="5" width="1" height="1" fill="#000"/><rect x="10" y="5" width="4" height="1" fill="#000"/><rect x="8" y="7" width="2" height="1" fill="#000"/><rect x="11" y="7" width="3" height="1" fill="#000"/><rect x="8" y="9" width="4" height="1" fill="#000"/><rect x="13" y="9" width="1" height="1" fill="#000"/><rect x="8" y="11" width="1" height="1" fill="#000"/><rect x="10" y="11" width="3" height="1" fill="#000"/><rect x="4" y="6" width="1" height="1" fill="#f08010"/><rect x="3" y="9" width="3" height="1" fill="#f08010"/></svg>
<div class="t" style="left:84px;top:286px;color:#000;">virtual_edit</div>
<div class="t" style="left:260px;top:286px;color:#000">Person</div>
<div style="left:54px;top:305px;width:6px;height:1px;background:repeating-linear-gradient(to right,#a09070 0 1px,transparent 1px 2px)"></div>
<div style="left:45px;top:301px;width:9px;height:9px;border:1px solid #a89a78;background:#fff"></div>
<div style="left:47px;top:305px;width:5px;height:1px;background:#000"></div>
<div style="left:49px;top:303px;width:1px;height:5px;background:#000"></div>
<svg style="left:62px;top:299px" width="16" height="13" viewBox="0 0 16 13"><rect x="0" y="0" width="16" height="13" fill="#8c8c8c"/><rect x="1" y="0" width="14" height="1" fill="#f8f8f8"/><rect x="1" y="2" width="6" height="1" fill="#f8f8f8"/><rect x="8" y="2" width="7" height="1" fill="#f8f8f8"/><rect x="1" y="4" width="14" height="8" fill="#ececec"/><rect x="1" y="4" width="6" height="8" fill="#f6f6f6"/><rect x="2" y="5" width="4" height="1" fill="#000"/><rect x="2" y="5" width="1" height="7" fill="#000"/><rect x="2" y="7" width="4" height="1" fill="#000"/><rect x="8" y="5" width="1" height="1" fill="#000"/><rect x="10" y="5" width="4" height="1" fill="#000"/><rect x="8" y="7" width="2" height="1" fill="#000"/><rect x="11" y="7" width="3" height="1" fill="#000"/><rect x="8" y="9" width="4" height="1" fill="#000"/><rect x="13" y="9" width="1" height="1" fill="#000"/><rect x="8" y="11" width="1" height="1" fill="#000"/><rect x="10" y="11" width="3" height="1" fill="#000"/><rect x="4" y="6" width="1" height="1" fill="#f08010"/><rect x="3" y="9" width="3" height="1" fill="#f08010"/></svg>
<div class="t" style="left:84px;top:299px;color:#000;">virtual_edit_frame</div>
<div class="t" style="left:260px;top:299px;color:#000">Person</div>
<div style="left:14px;top:318px;width:6px;height:1px;background:repeating-linear-gradient(to right,#a09070 0 1px,transparent 1px 2px)"></div>
<div style="left:5px;top:314px;width:9px;height:9px;border:1px solid #a89a78;background:#fff"></div>
<div style="left:7px;top:318px;width:5px;height:1px;background:#000"></div>
<div style="left:9px;top:316px;width:1px;height:5px;background:#000"></div>
<div class="t" style="left:21px;top:312px;color:#000;"><span style="letter-spacing:-0.7px">REAL</span></div>
<div style="left:14px;top:331px;width:6px;height:1px;background:repeating-linear-gradient(to right,#a09070 0 1px,transparent 1px 2px)"></div>
<div style="left:5px;top:327px;width:9px;height:9px;border:1px solid #a89a78;background:#fff"></div>
<div style="left:7px;top:331px;width:5px;height:1px;background:#000"></div>
<div style="left:9px;top:329px;width:1px;height:5px;background:#000"></div>
<div class="t" style="left:21px;top:325px;color:#000;"><span style="letter-spacing:-0.7px">STRING</span></div>
<div style="left:14px;top:344px;width:6px;height:1px;background:repeating-linear-gradient(to right,#a09070 0 1px,transparent 1px 2px)"></div>
<div style="left:5px;top:340px;width:9px;height:9px;border:1px solid #a89a78;background:#fff"></div>
<div style="left:7px;top:344px;width:5px;height:1px;background:#000"></div>
<div style="left:9px;top:342px;width:1px;height:5px;background:#000"></div>
<div class="t" style="left:21px;top:338px;color:#000;"><span style="letter-spacing:-0.7px">S</span>earch<span style="letter-spacing:-0.7px">W</span>in</div>
<div style="left:14px;top:357px;width:6px;height:1px;background:repeating-linear-gradient(to right,#a09070 0 1px,transparent 1px 2px)"></div>
<div style="left:5px;top:353px;width:9px;height:9px;border:1px solid #a89a78;background:#fff"></div>
<div style="left:7px;top:357px;width:5px;height:1px;background:#000"></div>
<div style="left:9px;top:355px;width:1px;height:5px;background:#000"></div>
<div class="t" style="left:21px;top:351px;color:#000;"><span style="letter-spacing:-0.7px">TIME</span></div>
<div style="left:14px;top:370px;width:6px;height:1px;background:repeating-linear-gradient(to right,#a09070 0 1px,transparent 1px 2px)"></div>
<div style="left:5px;top:366px;width:9px;height:9px;border:1px solid #a89a78;background:#fff"></div>
<div style="left:7px;top:370px;width:5px;height:1px;background:#000"></div>
<div style="left:9px;top:368px;width:1px;height:5px;background:#000"></div>
<div class="t" style="left:21px;top:364px;color:#000;"><span style="letter-spacing:-0.7px">UINT</span></div>
<div style="left:14px;top:383px;width:6px;height:1px;background:repeating-linear-gradient(to right,#a09070 0 1px,transparent 1px 2px)"></div>
<div style="left:5px;top:379px;width:9px;height:9px;border:1px solid #a89a78;background:#fff"></div>
<div style="left:7px;top:383px;width:5px;height:1px;background:#000"></div>
<div style="left:9px;top:381px;width:1px;height:5px;background:#000"></div>
<div class="t" style="left:21px;top:377px;color:#000;"><span style="letter-spacing:-0.7px">VOID</span></div>
</div>
<div style="left:314px;top:139px;width:16px;height:375px;background-color:#efece4;background-image:repeating-conic-gradient(#ded9c9 0 25%,#f4f2ea 0 50%);background-size:2px 2px"></div>
<div style="left:314px;top:123px;width:16px;height:16px;background:#ded9c9;border-top:1px solid #e0dbcc;border-left:1px solid #e0dbcc;border-right:1px solid #3f3f3f;border-bottom:1px solid #3f3f3f;box-sizing:border-box"></div>
<div style="left:315px;top:124px;width:14px;height:14px;border-top:1px solid #f2eee4;border-left:1px solid #f2eee4;border-right:1px solid #ae986c;border-bottom:1px solid #ae986c;box-sizing:border-box"></div>
<svg style="left:318px;top:128px" width="7" height="4"><path d="M3.5 0L7 4H0z" fill="#000"/></svg>
<div style="left:314px;top:204px;width:16px;height:235px;background:#ded9c9;border-top:1px solid #e0dbcc;border-left:1px solid #e0dbcc;border-right:1px solid #3f3f3f;border-bottom:1px solid #3f3f3f;box-sizing:border-box"></div>
<div style="left:315px;top:205px;width:14px;height:233px;border-top:1px solid #f2eee4;border-left:1px solid #f2eee4;border-right:1px solid #ae986c;border-bottom:1px solid #ae986c;box-sizing:border-box"></div>
<div style="left:314px;top:514px;width:16px;height:16px;background:#ded9c9;border-top:1px solid #e0dbcc;border-left:1px solid #e0dbcc;border-right:1px solid #3f3f3f;border-bottom:1px solid #3f3f3f;box-sizing:border-box"></div>
<div style="left:315px;top:515px;width:14px;height:14px;border-top:1px solid #f2eee4;border-left:1px solid #f2eee4;border-right:1px solid #ae986c;border-bottom:1px solid #ae986c;box-sizing:border-box"></div>
<svg style="left:318px;top:520px" width="7" height="4"><path d="M0 0H7L3.5 4z" fill="#000"/></svg>
<div style="left:28px;top:530px;width:286px;height:16px;background-color:#efece4;background-image:repeating-conic-gradient(#ded9c9 0 25%,#f4f2ea 0 50%);background-size:2px 2px"></div>
<div style="left:28px;top:530px;width:16px;height:16px;background:#ded9c9;border-top:1px solid #e0dbcc;border-left:1px solid #e0dbcc;border-right:1px solid #3f3f3f;border-bottom:1px solid #3f3f3f;box-sizing:border-box"></div>
<div style="left:29px;top:531px;width:14px;height:14px;border-top:1px solid #f2eee4;border-left:1px solid #f2eee4;border-right:1px solid #ae986c;border-bottom:1px solid #ae986c;box-sizing:border-box"></div>
<svg style="left:34px;top:534px" width="4" height="7"><path d="M4 0V7L0 3.5z" fill="#000"/></svg>
<div style="left:44px;top:530px;width:227px;height:16px;background:#ded9c9;border-top:1px solid #e0dbcc;border-left:1px solid #e0dbcc;border-right:1px solid #3f3f3f;border-bottom:1px solid #3f3f3f;box-sizing:border-box"></div>
<div style="left:45px;top:531px;width:225px;height:14px;border-top:1px solid #f2eee4;border-left:1px solid #f2eee4;border-right:1px solid #ae986c;border-bottom:1px solid #ae986c;box-sizing:border-box"></div>
<div style="left:298px;top:530px;width:16px;height:16px;background:#ded9c9;border-top:1px solid #e0dbcc;border-left:1px solid #e0dbcc;border-right:1px solid #3f3f3f;border-bottom:1px solid #3f3f3f;box-sizing:border-box"></div>
<div style="left:299px;top:531px;width:14px;height:14px;border-top:1px solid #f2eee4;border-left:1px solid #f2eee4;border-right:1px solid #ae986c;border-bottom:1px solid #ae986c;box-sizing:border-box"></div>
<svg style="left:304px;top:534px" width="4" height="7"><path d="M0 0V7L4 3.5z" fill="#000"/></svg>
<div style="left:314px;top:530px;width:16px;height:16px;background:#ded9c9"></div>
<div style="left:337px;top:79px;width:1px;height:470px;background:#ae986c"></div>
<div style="left:338px;top:79px;width:1px;height:470px;background:#3f3f3f"></div>
<svg style="left:0;top:0" width="926" height="573" viewBox="0 0 926 573"><path d="M722.5 92.5 L726.5 83.5 Q727.5 80.5 730.5 80.5 L809.5 80.5 Q812.5 80.5 813.5 83.5 L817.5 92.5" fill="#ded9c9" stroke="#000" stroke-width="1"/><path d="M628.5 92.5 L632.5 83.5 Q633.5 80.5 636.5 80.5 L715.5 80.5 Q718.5 80.5 719.5 83.5 L723.5 92.5" fill="#ded9c9" stroke="#000" stroke-width="1"/><path d="M535.5 92.5 L539.5 83.5 Q540.5 80.5 543.5 80.5 L621.5 80.5 Q624.5 80.5 625.5 83.5 L629.5 92.5" fill="#ded9c9" stroke="#000" stroke-width="1"/><path d="M437.5 92.5 L441.5 83.5 Q442.5 80.5 445.5 80.5 L528.5 80.5 Q531.5 80.5 532.5 83.5 L536.5 92.5" fill="#ded9c9" stroke="#000" stroke-width="1"/><path d="M343.5 94 L347.5 82.5 Q348.5 79.5 351.5 79.5 L429.5 79.5 Q432.5 79.5 433.5 82.5 L437.5 94 Z" fill="#fff" stroke="none"/><path d="M343.5 93.5 L347.5 82.5 Q348.5 79.5 351.5 79.5 L429.5 79.5 Q432.5 79.5 433.5 82.5 L437.5 93.5" fill="none" stroke="#000" stroke-width="1"/></svg>
<div style="left:437px;top:92px;width:476px;height:1px;background:#f2eee4"></div>
<div class="t" style="left:343px;top:80px;width:94px;text-align:center">Definition</div>
<div class="t" style="left:437px;top:81px;width:99px;text-align:center">Text definitions</div>
<div class="t" style="left:535px;top:81px;width:94px;text-align:center">Regions</div>
<div class="t" style="left:628px;top:81px;width:95px;text-align:center">Actions</div>
<div class="t" style="left:722px;top:81px;width:95px;text-align:center">References</div>
<div class="t" style="left:346px;top:111px;"><span style="letter-spacing:-0.7px">N</span>ame</div>
<div class="t" style="left:346px;top:136px;"><span style="letter-spacing:-0.7px">C</span>ontext class</div>
<div class="t" style="left:346px;top:179px;"><span style="letter-spacing:-0.7px">S</span>tyle</div>
<div class="t" style="left:346px;top:203px;"><span style="letter-spacing:-0.7px">F</span>ont</div>
<div class="t" style="left:346px;top:248px;"><span style="letter-spacing:-0.7px">L</span>ayout</div>
<div class="t" style="left:346px;top:272px;"><span style="letter-spacing:-0.7px">I</span>mage</div>
<div class="t" style="left:347px;top:304px;"><span style="letter-spacing:-0.7px">A</span>ctions</div>
<div style="left:417px;top:110px;width:265px;height:18px;background:#fff;border-top:1px solid #ae986c;border-left:1px solid #ae986c;border-right:1px solid #f2eee4;border-bottom:1px solid #f2eee4;box-sizing:border-box"></div>
<div style="left:418px;top:111px;width:263px;height:16px;border-top:1px solid #3f3f3f;border-left:1px solid #3f3f3f;border-right:1px solid #e0dbcc;border-bottom:1px solid #e0dbcc;box-sizing:border-box"></div>
<div class="t" style="left:421px;top:113px;">list</div>
<div style="left:686px;top:110px;width:59px;height:18px;background:#fff;border-top:1px solid #ae986c;border-left:1px solid #ae986c;border-right:1px solid #f2eee4;border-bottom:1px solid #f2eee4;box-sizing:border-box"></div>
<div style="left:687px;top:111px;width:57px;height:16px;border-top:1px solid #3f3f3f;border-left:1px solid #3f3f3f;border-right:1px solid #e0dbcc;border-bottom:1px solid #e0dbcc;box-sizing:border-box"></div>
<div class="t" style="left:691px;top:113px;">0</div>
<div style="left:750px;top:112px;width:13px;height:13px;background:#fff;border-top:1px solid #ae986c;border-left:1px solid #ae986c;border-right:1px solid #f2eee4;border-bottom:1px solid #f2eee4;box-sizing:border-box"></div>
<div style="left:751px;top:113px;width:11px;height:11px;border-top:1px solid #3f3f3f;border-left:1px solid #3f3f3f;border-right:1px solid #e0dbcc;border-bottom:1px solid #e0dbcc;box-sizing:border-box"></div>
<div style="left:417px;top:131px;width:351px;height:25px;border:1px solid #ae986c;box-sizing:border-box"></div>
<div style="left:418px;top:132px;width:349px;height:23px;border-top:1px solid #f2eee4;border-left:1px solid #f2eee4;box-sizing:border-box"></div>
<div style="left:417px;top:156px;width:352px;height:1px;background:#f2eee4"></div>
<div style="left:768px;top:131px;width:1px;height:26px;background:#f2eee4"></div>
<div style="left:421px;top:135px;width:243px;height:18px;background:#fff;border-top:1px solid #ae986c;border-left:1px solid #ae986c;border-right:1px solid #f2eee4;border-bottom:1px solid #f2eee4;box-sizing:border-box"></div>
<div style="left:422px;top:136px;width:241px;height:16px;border-top:1px solid #3f3f3f;border-left:1px solid #3f3f3f;border-right:1px solid #e0dbcc;border-bottom:1px solid #e0dbcc;box-sizing:border-box"></div>
<div style="left:673px;top:135px;width:69px;height:18px;background:#fff;border-top:1px solid #ae986c;border-left:1px solid #ae986c;border-right:1px solid #f2eee4;border-bottom:1px solid #f2eee4;box-sizing:border-box"></div>
<div style="left:674px;top:136px;width:67px;height:16px;border-top:1px solid #3f3f3f;border-left:1px solid #3f3f3f;border-right:1px solid #e0dbcc;border-bottom:1px solid #e0dbcc;box-sizing:border-box"></div>
<div style="left:744px;top:134px;width:21px;height:19px;background:#ded9c9;border-top:1px solid #e0dbcc;border-left:1px solid #e0dbcc;border-right:1px solid #3f3f3f;border-bottom:1px solid #3f3f3f;box-sizing:border-box"></div>
<div style="left:745px;top:135px;width:19px;height:17px;border-top:1px solid #f2eee4;border-left:1px solid #f2eee4;border-right:1px solid #ae986c;border-bottom:1px solid #ae986c;box-sizing:border-box"></div>
<svg style="left:748px;top:137px" width="14" height="14" viewBox="0 0 14 14"><path d="M4 4L9 9" stroke="#303030" stroke-width="1.2"/><circle cx="4" cy="4" r="2.8" fill="#1020c0"/><circle cx="3.3" cy="3.3" r="1" fill="#8090ff"/><circle cx="9.5" cy="9.5" r="2.8" fill="#f0a010"/><circle cx="8.8" cy="8.8" r="1" fill="#ffe080"/></svg>
<div style="left:417px;top:178px;width:100px;height:20px;background:#fff;border-top:1px solid #ae986c;border-left:1px solid #ae986c;border-right:1px solid #f2eee4;border-bottom:1px solid #f2eee4;box-sizing:border-box"></div>
<div style="left:418px;top:179px;width:98px;height:18px;border-top:1px solid #3f3f3f;border-left:1px solid #3f3f3f;border-right:1px solid #e0dbcc;border-bottom:1px solid #e0dbcc;box-sizing:border-box"></div>
<div class="t" style="left:421px;top:181px;">_list</div>
<div style="left:499px;top:180px;width:16px;height:16px;background:#ded9c9;border-top:1px solid #e0dbcc;border-left:1px solid #e0dbcc;border-right:1px solid #3f3f3f;border-bottom:1px solid #3f3f3f;box-sizing:border-box"></div>
<div style="left:500px;top:181px;width:14px;height:14px;border-top:1px solid #f2eee4;border-left:1px solid #f2eee4;border-right:1px solid #ae986c;border-bottom:1px solid #ae986c;box-sizing:border-box"></div>
<svg style="left:503px;top:186px" width="7" height="4"><path d="M0 0H7L3.5 4z" fill="#000"/></svg>
<div style="left:417px;top:202px;width:100px;height:20px;background:#fff;border-top:1px solid #ae986c;border-left:1px solid #ae986c;border-right:1px solid #f2eee4;border-bottom:1px solid #f2eee4;box-sizing:border-box"></div>
<div style="left:418px;top:203px;width:98px;height:18px;border-top:1px solid #3f3f3f;border-left:1px solid #3f3f3f;border-right:1px solid #e0dbcc;border-bottom:1px solid #e0dbcc;box-sizing:border-box"></div>
<div style="left:499px;top:204px;width:16px;height:16px;background:#ded9c9;border-top:1px solid #e0dbcc;border-left:1px solid #e0dbcc;border-right:1px solid #3f3f3f;border-bottom:1px solid #3f3f3f;box-sizing:border-box"></div>
<div style="left:500px;top:205px;width:14px;height:14px;border-top:1px solid #f2eee4;border-left:1px solid #f2eee4;border-right:1px solid #ae986c;border-bottom:1px solid #ae986c;box-sizing:border-box"></div>
<svg style="left:503px;top:210px" width="7" height="4"><path d="M0 0H7L3.5 4z" fill="#000"/></svg>
<div style="left:417px;top:247px;width:100px;height:20px;background:#fff;border-top:1px solid #ae986c;border-left:1px solid #ae986c;border-right:1px solid #f2eee4;border-bottom:1px solid #f2eee4;box-sizing:border-box"></div>
<div style="left:418px;top:248px;width:98px;height:18px;border-top:1px solid #3f3f3f;border-left:1px solid #3f3f3f;border-right:1px solid #e0dbcc;border-bottom:1px solid #e0dbcc;box-sizing:border-box"></div>
<div style="left:499px;top:249px;width:16px;height:16px;background:#ded9c9;border-top:1px solid #e0dbcc;border-left:1px solid #e0dbcc;border-right:1px solid #3f3f3f;border-bottom:1px solid #3f3f3f;box-sizing:border-box"></div>
<div style="left:500px;top:250px;width:14px;height:14px;border-top:1px solid #f2eee4;border-left:1px solid #f2eee4;border-right:1px solid #ae986c;border-bottom:1px solid #ae986c;box-sizing:border-box"></div>
<svg style="left:503px;top:255px" width="7" height="4"><path d="M0 0H7L3.5 4z" fill="#000"/></svg>
<div style="left:417px;top:271px;width:100px;height:20px;background:#fff;border-top:1px solid #ae986c;border-left:1px solid #ae986c;border-right:1px solid #f2eee4;border-bottom:1px solid #f2eee4;box-sizing:border-box"></div>
<div style="left:418px;top:272px;width:98px;height:18px;border-top:1px solid #3f3f3f;border-left:1px solid #3f3f3f;border-right:1px solid #e0dbcc;border-bottom:1px solid #e0dbcc;box-sizing:border-box"></div>
<div style="left:499px;top:273px;width:16px;height:16px;background:#ded9c9;border-top:1px solid #e0dbcc;border-left:1px solid #e0dbcc;border-right:1px solid #3f3f3f;border-bottom:1px solid #3f3f3f;box-sizing:border-box"></div>
<div style="left:500px;top:274px;width:14px;height:14px;border-top:1px solid #f2eee4;border-left:1px solid #f2eee4;border-right:1px solid #ae986c;border-bottom:1px solid #ae986c;box-sizing:border-box"></div>
<svg style="left:503px;top:279px" width="7" height="4"><path d="M0 0H7L3.5 4z" fill="#000"/></svg>
<div class="t" style="left:520px;top:159px;"><span style="letter-spacing:-0.7px">M</span>argins</div>
<div style="left:521px;top:174px;width:155px;height:50px;border:1px solid #ae986c;box-sizing:border-box"></div>
<div style="left:522px;top:175px;width:153px;height:48px;border-top:1px solid #f2eee4;border-left:1px solid #f2eee4;box-sizing:border-box"></div>
<div style="left:521px;top:224px;width:156px;height:1px;background:#f2eee4"></div>
<div style="left:676px;top:174px;width:1px;height:51px;background:#f2eee4"></div>
<div class="t" style="left:527px;top:181px;"><span style="letter-spacing:-0.7px">T</span>op</div>
<div class="t" style="left:527px;top:201px;"><span style="letter-spacing:-0.7px">L</span>eft</div>
<div class="t" style="left:594px;top:181px;"><span style="letter-spacing:-0.7px">B</span>ottom</div>
<div class="t" style="left:594px;top:201px;"><span style="letter-spacing:-0.7px">R</span>ight</div>
<div style="left:552px;top:180px;width:36px;height:18px;background:#fff;border-top:1px solid #ae986c;border-left:1px solid #ae986c;border-right:1px solid #f2eee4;border-bottom:1px solid #f2eee4;box-sizing:border-box"></div>
<div style="left:553px;top:181px;width:34px;height:16px;border-top:1px solid #3f3f3f;border-left:1px solid #3f3f3f;border-right:1px solid #e0dbcc;border-bottom:1px solid #e0dbcc;box-sizing:border-box"></div>
<div class="t" style="left:557px;top:183px;">0</div>
<div style="left:552px;top:200px;width:36px;height:18px;background:#fff;border-top:1px solid #ae986c;border-left:1px solid #ae986c;border-right:1px solid #f2eee4;border-bottom:1px solid #f2eee4;box-sizing:border-box"></div>
<div style="left:553px;top:201px;width:34px;height:16px;border-top:1px solid #3f3f3f;border-left:1px solid #3f3f3f;border-right:1px solid #e0dbcc;border-bottom:1px solid #e0dbcc;box-sizing:border-box"></div>
<div class="t" style="left:557px;top:203px;">0</div>
<div style="left:634px;top:180px;width:36px;height:18px;background:#fff;border-top:1px solid #ae986c;border-left:1px solid #ae986c;border-right:1px solid #f2eee4;border-bottom:1px solid #f2eee4;box-sizing:border-box"></div>
<div style="left:635px;top:181px;width:34px;height:16px;border-top:1px solid #3f3f3f;border-left:1px solid #3f3f3f;border-right:1px solid #e0dbcc;border-bottom:1px solid #e0dbcc;box-sizing:border-box"></div>
<div class="t" style="left:639px;top:183px;">0</div>
<div style="left:634px;top:200px;width:36px;height:18px;background:#fff;border-top:1px solid #ae986c;border-left:1px solid #ae986c;border-right:1px solid #f2eee4;border-bottom:1px solid #f2eee4;box-sizing:border-box"></div>
<div style="left:635px;top:201px;width:34px;height:16px;border-top:1px solid #3f3f3f;border-left:1px solid #3f3f3f;border-right:1px solid #e0dbcc;border-bottom:1px solid #e0dbcc;box-sizing:border-box"></div>
<div class="t" style="left:639px;top:203px;">0</div>
<div class="t" style="left:520px;top:228px;"><span style="letter-spacing:-0.7px">S</span>ize</div>
<div style="left:521px;top:243px;width:79px;height:50px;border:1px solid #ae986c;box-sizing:border-box"></div>
<div style="left:522px;top:244px;width:77px;height:48px;border-top:1px solid #f2eee4;border-left:1px solid #f2eee4;box-sizing:border-box"></div>
<div style="left:521px;top:293px;width:80px;height:1px;background:#f2eee4"></div>
<div style="left:600px;top:243px;width:1px;height:51px;background:#f2eee4"></div>
<div class="t" style="left:527px;top:252px;"><span style="letter-spacing:-0.7px">W</span>idth</div>
<div class="t" style="left:527px;top:272px;"><span style="letter-spacing:-0.7px">H</span>eight</div>
<div style="left:562px;top:250px;width:33px;height:17px;background:#fff;border-top:1px solid #ae986c;border-left:1px solid #ae986c;border-right:1px solid #f2eee4;border-bottom:1px solid #f2eee4;box-sizing:border-box"></div>
<div style="left:563px;top:251px;width:31px;height:15px;border-top:1px solid #3f3f3f;border-left:1px solid #3f3f3f;border-right:1px solid #e0dbcc;border-bottom:1px solid #e0dbcc;box-sizing:border-box"></div>
<div class="t" style="left:567px;top:253px;">0</div>
<div style="left:562px;top:270px;width:33px;height:17px;background:#fff;border-top:1px solid #ae986c;border-left:1px solid #ae986c;border-right:1px solid #f2eee4;border-bottom:1px solid #f2eee4;box-sizing:border-box"></div>
<div style="left:563px;top:271px;width:31px;height:15px;border-top:1px solid #3f3f3f;border-left:1px solid #3f3f3f;border-right:1px solid #e0dbcc;border-bottom:1px solid #e0dbcc;box-sizing:border-box"></div>
<div class="t" style="left:567px;top:273px;">0</div>
<div class="t" style="left:604px;top:228px;"><span style="letter-spacing:-0.7px">G</span>rid cells</div>
<div style="left:605px;top:243px;width:70px;height:50px;border:1px solid #ae986c;box-sizing:border-box"></div>
<div style="left:606px;top:244px;width:68px;height:48px;border-top:1px solid #f2eee4;border-left:1px solid #f2eee4;box-sizing:border-box"></div>
<div style="left:605px;top:293px;width:71px;height:1px;background:#f2eee4"></div>
<div style="left:675px;top:243px;width:1px;height:51px;background:#f2eee4"></div>
<div class="t" style="left:610px;top:251px;"><span style="letter-spacing:-0.7px">X</span></div>
<div class="t" style="left:610px;top:270px;"><span style="letter-spacing:-0.7px">Y</span></div>
<div style="left:636px;top:250px;width:34px;height:17px;background:#fff;border-top:1px solid #ae986c;border-left:1px solid #ae986c;border-right:1px solid #f2eee4;border-bottom:1px solid #f2eee4;box-sizing:border-box"></div>
<div style="left:637px;top:251px;width:32px;height:15px;border-top:1px solid #3f3f3f;border-left:1px solid #3f3f3f;border-right:1px solid #e0dbcc;border-bottom:1px solid #e0dbcc;box-sizing:border-box"></div>
<div class="t" style="left:642px;top:253px;">1</div>
<div style="left:636px;top:270px;width:34px;height:17px;background:#fff;border-top:1px solid #ae986c;border-left:1px solid #ae986c;border-right:1px solid #f2eee4;border-bottom:1px solid #f2eee4;box-sizing:border-box"></div>
<div style="left:637px;top:271px;width:32px;height:15px;border-top:1px solid #3f3f3f;border-left:1px solid #3f3f3f;border-right:1px solid #e0dbcc;border-bottom:1px solid #e0dbcc;box-sizing:border-box"></div>
<div class="t" style="left:642px;top:273px;">1</div>
<div class="t" style="left:680px;top:160px;"><span style="letter-spacing:-0.7px">O</span>ptons</div>
<div style="left:681px;top:174px;width:89px;height:119px;border:1px solid #ae986c;box-sizing:border-box"></div>
<div style="left:682px;top:175px;width:87px;height:117px;border-top:1px solid #f2eee4;border-left:1px solid #f2eee4;box-sizing:border-box"></div>
<div style="left:681px;top:293px;width:90px;height:1px;background:#f2eee4"></div>
<div style="left:770px;top:174px;width:1px;height:120px;background:#f2eee4"></div>
<div style="left:687px;top:181px;width:13px;height:13px;background:#fff;border-top:1px solid #ae986c;border-left:1px solid #ae986c;border-right:1px solid #f2eee4;border-bottom:1px solid #f2eee4;box-sizing:border-box"></div>
<div style="left:688px;top:182px;width:11px;height:11px;border-top:1px solid #3f3f3f;border-left:1px solid #3f3f3f;border-right:1px solid #e0dbcc;border-bottom:1px solid #e0dbcc;box-sizing:border-box"></div>
<div class="t" style="left:702px;top:181px;"><span style="letter-spacing:-0.7px">D</span>ock window</div>
<div style="left:687px;top:198px;width:13px;height:13px;background:#fff;border-top:1px solid #ae986c;border-left:1px solid #ae986c;border-right:1px solid #f2eee4;border-bottom:1px solid #f2eee4;box-sizing:border-box"></div>
<div style="left:688px;top:199px;width:11px;height:11px;border-top:1px solid #3f3f3f;border-left:1px solid #3f3f3f;border-right:1px solid #e0dbcc;border-bottom:1px solid #e0dbcc;box-sizing:border-box"></div>
<div class="t" style="left:702px;top:198px;"><span style="letter-spacing:-0.7px">V</span>irtual</div>
<div style="left:687px;top:215px;width:13px;height:13px;background:#fff;border-top:1px solid #ae986c;border-left:1px solid #ae986c;border-right:1px solid #f2eee4;border-bottom:1px solid #f2eee4;box-sizing:border-box"></div>
<div style="left:688px;top:216px;width:11px;height:11px;border-top:1px solid #3f3f3f;border-left:1px solid #3f3f3f;border-right:1px solid #e0dbcc;border-bottom:1px solid #e0dbcc;box-sizing:border-box"></div>
<div class="t" style="left:702px;top:215px;"><span style="letter-spacing:-0.7px">O</span>utput</div>
<div class="t" style="left:686px;top:232px;"><span style="letter-spacing:-0.7px">D</span>istance</div>
<div style="left:737px;top:232px;width:27px;height:17px;background:#fff;border-top:1px solid #ae986c;border-left:1px solid #ae986c;border-right:1px solid #f2eee4;border-bottom:1px solid #f2eee4;box-sizing:border-box"></div>
<div style="left:738px;top:233px;width:25px;height:15px;border-top:1px solid #3f3f3f;border-left:1px solid #3f3f3f;border-right:1px solid #e0dbcc;border-bottom:1px solid #e0dbcc;box-sizing:border-box"></div>
<div class="t" style="left:741px;top:235px;">0</div>
<div class="t" style="left:686px;top:252px;"><span style="letter-spacing:-0.7px">O</span>rder</div>
<div style="left:737px;top:252px;width:27px;height:17px;background:#fff;border-top:1px solid #ae986c;border-left:1px solid #ae986c;border-right:1px solid #f2eee4;border-bottom:1px solid #f2eee4;box-sizing:border-box"></div>
<div style="left:738px;top:253px;width:25px;height:15px;border-top:1px solid #3f3f3f;border-left:1px solid #3f3f3f;border-right:1px solid #e0dbcc;border-bottom:1px solid #e0dbcc;box-sizing:border-box"></div>
<div class="t" style="left:741px;top:255px;">-1</div>
<div class="t" style="left:686px;top:272px;"><span style="letter-spacing:-0.7px">L</span>ength</div>
<div style="left:737px;top:272px;width:27px;height:17px;background:#fff;border-top:1px solid #ae986c;border-left:1px solid #ae986c;border-right:1px solid #f2eee4;border-bottom:1px solid #f2eee4;box-sizing:border-box"></div>
<div style="left:738px;top:273px;width:25px;height:15px;border-top:1px solid #3f3f3f;border-left:1px solid #3f3f3f;border-right:1px solid #e0dbcc;border-bottom:1px solid #e0dbcc;box-sizing:border-box"></div>
<div class="t" style="left:741px;top:275px;">0</div>
<div class="t" style="left:774px;top:95px;"><span style="letter-spacing:-0.7px">F</span>ields</div>
<div style="left:775px;top:110px;width:138px;height:110px;background:#fff;border-top:1px solid #ae986c;border-left:1px solid #ae986c"></div>
<div style="left:773px;top:225px;width:140px;height:1px;background:#8f8878"></div>
<div style="left:773px;top:228px;width:140px;height:1px;background:#8f8878"></div>
<div style="left:913px;top:225px;width:5px;height:1px;background:#f2eee4"></div>
<div style="left:913px;top:228px;width:5px;height:1px;background:#f2eee4"></div>
<div class="t" style="left:775px;top:230px;"><span style="letter-spacing:-0.7px">B</span>uttons</div>
<div style="left:775px;top:245px;width:138px;height:46px;background:#fff;border-top:1px solid #ae986c;border-left:1px solid #ae986c"></div>
<div style="left:417px;top:303px;width:496px;height:68px;background:#fff;border-top:1px solid #ae986c;border-left:1px solid #ae986c"></div>
<div style="left:418px;top:304px;width:495px;height:19px;background:#ded9c9;border-top:1px solid #f2eee4;border-left:1px solid #f2eee4;border-bottom:1px solid #ae986c"></div>
<div style="left:418px;top:323px;width:495px;height:1px;background:#3f3f3f"></div>
<div style="left:764px;top:305px;width:1px;height:18px;background:#ae986c"></div>
<div style="left:765px;top:304px;width:1px;height:20px;background:#3f3f3f"></div>
<div style="left:766px;top:305px;width:1px;height:18px;background:#f2eee4"></div>
<div style="left:844px;top:305px;width:1px;height:18px;background:#ae986c"></div>
<div style="left:845px;top:304px;width:1px;height:20px;background:#3f3f3f"></div>
<div style="left:846px;top:305px;width:1px;height:18px;background:#f2eee4"></div>
<div class="t" style="left:421px;top:308px;"><span style="letter-spacing:-0.7px">C</span>ontext menu</div>
<div class="t" style="left:770px;top:308px;"><span style="letter-spacing:-0.7px">A</span>ction</div>
<div class="t" style="left:850px;top:308px;"><span style="letter-spacing:-0.7px">T</span>ype</div>
<div style="left:417px;top:376px;width:496px;height:68px;background:#fff;border-top:1px solid #ae986c;border-left:1px solid #ae986c"></div>
<div style="left:418px;top:377px;width:495px;height:19px;background:#ded9c9;border-top:1px solid #f2eee4;border-left:1px solid #f2eee4;border-bottom:1px solid #ae986c"></div>
<div style="left:418px;top:396px;width:495px;height:1px;background:#3f3f3f"></div>
<div style="left:764px;top:378px;width:1px;height:18px;background:#ae986c"></div>
<div style="left:765px;top:377px;width:1px;height:20px;background:#3f3f3f"></div>
<div style="left:766px;top:378px;width:1px;height:18px;background:#f2eee4"></div>
<div style="left:844px;top:378px;width:1px;height:18px;background:#ae986c"></div>
<div style="left:845px;top:377px;width:1px;height:20px;background:#3f3f3f"></div>
<div style="left:846px;top:378px;width:1px;height:18px;background:#f2eee4"></div>
<div class="t" style="left:421px;top:381px;"><span style="letter-spacing:-0.7px">T</span>oolbar</div>
<div class="t" style="left:770px;top:381px;"><span style="letter-spacing:-0.7px">A</span>ction</div>
<div class="t" style="left:850px;top:381px;"><span style="letter-spacing:-0.7px">T</span>ype</div>
<div style="left:417px;top:449px;width:496px;height:69px;background:#fff;border-top:1px solid #ae986c;border-left:1px solid #ae986c"></div>
<div style="left:418px;top:450px;width:495px;height:19px;background:#ded9c9;border-top:1px solid #f2eee4;border-left:1px solid #f2eee4;border-bottom:1px solid #ae986c"></div>
<div style="left:418px;top:469px;width:495px;height:1px;background:#3f3f3f"></div>
<div style="left:764px;top:451px;width:1px;height:18px;background:#ae986c"></div>
<div style="left:765px;top:450px;width:1px;height:20px;background:#3f3f3f"></div>
<div style="left:766px;top:451px;width:1px;height:18px;background:#f2eee4"></div>
<div style="left:844px;top:451px;width:1px;height:18px;background:#ae986c"></div>
<div style="left:845px;top:450px;width:1px;height:20px;background:#3f3f3f"></div>
<div style="left:846px;top:451px;width:1px;height:18px;background:#f2eee4"></div>
<div class="t" style="left:421px;top:454px;"><span style="letter-spacing:-0.7px">M</span>enu</div>
<div class="t" style="left:770px;top:454px;"><span style="letter-spacing:-0.7px">A</span>ction</div>
<div class="t" style="left:850px;top:454px;"><span style="letter-spacing:-0.7px">T</span>ype</div>
<div style="left:417px;top:371px;width:10px;height:1px;background:#f2eee4"></div>
<div style="left:427px;top:372px;width:486px;height:1px;background:#8f8878"></div>
<div style="left:427px;top:375px;width:486px;height:1px;background:#8f8878"></div>
<div style="left:913px;top:372px;width:5px;height:1px;background:#f2eee4"></div>
<div style="left:913px;top:375px;width:5px;height:1px;background:#f2eee4"></div>
<div style="left:417px;top:375px;width:10px;height:1px;background:#f2eee4"></div>
<div style="left:417px;top:444px;width:10px;height:1px;background:#f2eee4"></div>
<div style="left:427px;top:445px;width:486px;height:1px;background:#8f8878"></div>
<div style="left:427px;top:448px;width:486px;height:1px;background:#8f8878"></div>
<div style="left:913px;top:445px;width:5px;height:1px;background:#f2eee4"></div>
<div style="left:913px;top:448px;width:5px;height:1px;background:#f2eee4"></div>
<div style="left:417px;top:448px;width:10px;height:1px;background:#f2eee4"></div>
<div style="left:343px;top:530px;width:575px;height:1px;background:#ae986c"></div>
<div style="left:343px;top:531px;width:575px;height:1px;background:#3f3f3f"></div>
<svg style="left:0;top:0" width="926" height="573" viewBox="0 0 926 573"><path d="M630.5 531.5 L634.0 540.5 Q635.0 543.5 638.0 543.5 L766.0 543.5 Q769.0 543.5 770.0 540.5 L773.5 531.5" fill="#ded9c9" stroke="#000" stroke-width="1"/><path d="M343.5 531.5 L347.0 540.5 Q348.0 543.5 351.0 543.5 L479.0 543.5 Q482.0 543.5 483.0 540.5 L486.5 531.5" fill="#ded9c9" stroke="#000" stroke-width="1"/><path d="M486.5 530 L490.0 541.5 Q491.0 544.5 494.0 544.5 L623.0 544.5 Q626.0 544.5 627.0 541.5 L630.5 530 Z" fill="#fff" stroke="none"/><path d="M486.5 530 L490.0 541.5 Q491.0 544.5 494.0 544.5 L623.0 544.5 Q626.0 544.5 627.0 541.5 L630.5 530" fill="none" stroke="#000" stroke-width="1"/></svg>
<div class="t" style="left:343px;top:530px;width:143px;text-align:center">Design</div>
<div class="t" style="left:486px;top:531px;width:144px;text-align:center">Properties</div>
<div class="t" style="left:630px;top:530px;width:143px;text-align:center">Context classes</div>
<svg style="left:908px;top:555px" width="14" height="14" viewBox="0 0 14 14"><path d="M13 1L1 13M13 5L5 13M13 9L9 13" stroke="#ae986c" stroke-width="1.2"/><path d="M13 2L2 13M13 6L6 13M13 10L10 13" stroke="#f2eee4" stroke-width="0.8"/></svg>
<svg style="left:0;top:0" width="926" height="573" viewBox="0 0 926 573" shape-rendering="crispEdges"><ellipse cx="511.5" cy="144.5" rx="172" ry="23" fill="none" stroke="#7d0a12" stroke-width="3.4"/><ellipse cx="754.5" cy="143" rx="22" ry="18.5" fill="none" stroke="#7d0a12" stroke-width="3.4"/></svg>
</body></html>
